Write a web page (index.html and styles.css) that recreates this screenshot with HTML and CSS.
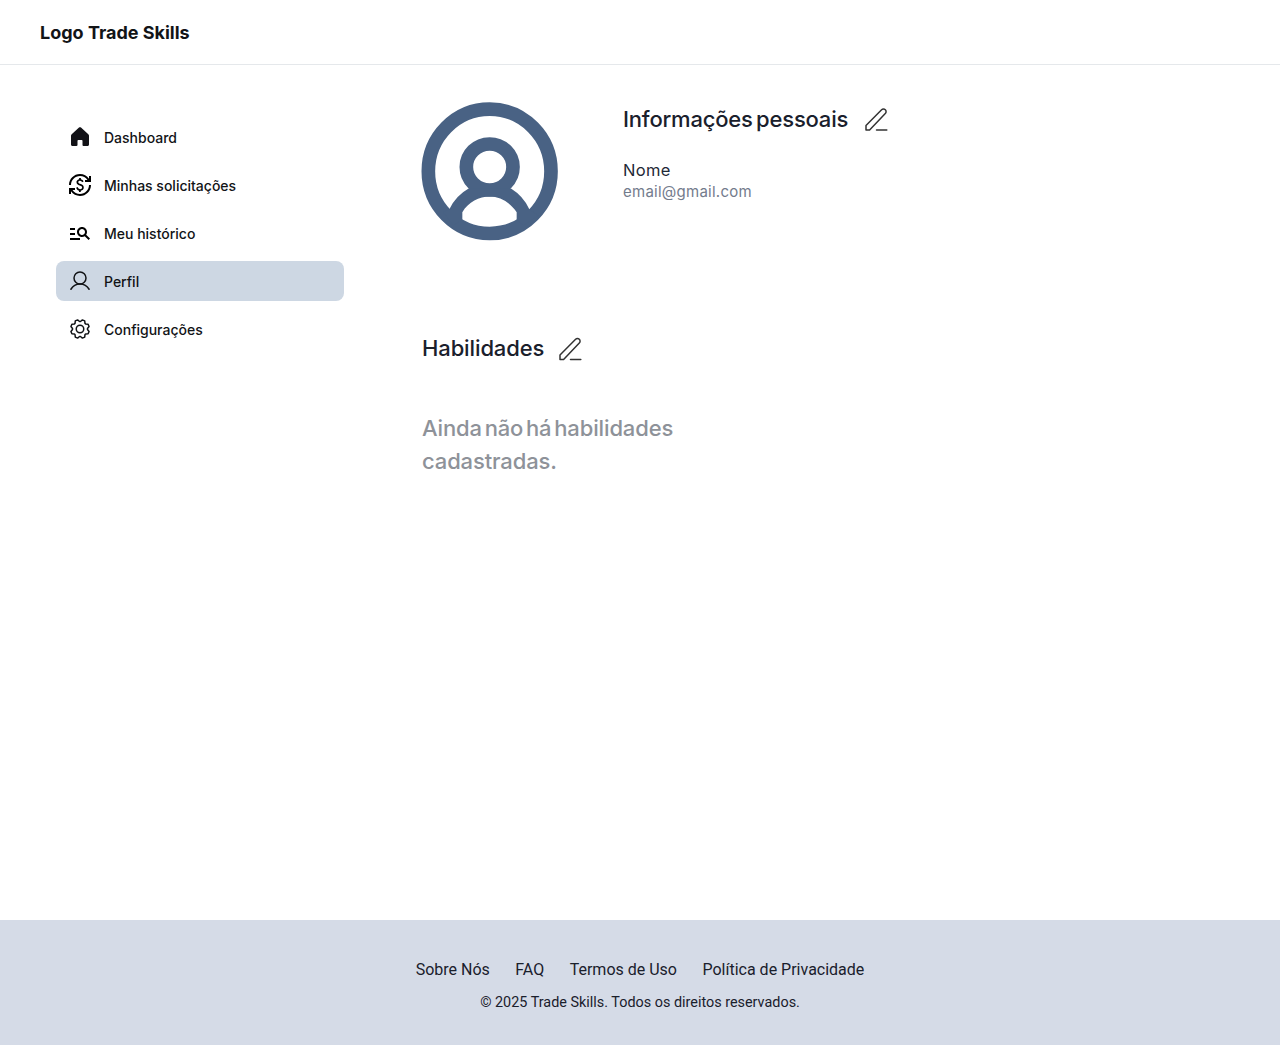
FILE: index.html
```html
<!DOCTYPE html>
<html lang="pt-BR">
<head>
<meta charset="utf-8">
<title>Perfil - Trade Skills</title>
<link rel="stylesheet" href="styles.css">
</head>
<body>
<header class="header"><div class="logo">Logo Trade Skills</div></header>
<div class="layout">
  <nav class="sidebar">
    <a class="item"><svg class="icon" viewBox="0 0 24 24"><path d="M12 2.2c.4 0 .7.1 1 .4l7.3 6.6c.5.4.7.9.7 1.5v8.800c0 .9-.6 1.500-1.500 1.500h-4.100c-.5 0-.9-.4-.9-.9v-4.300c0-.5-.3-.8-.8-.8h-3.400c-.5 0-.8.3-.8.8v4.300c0 .5-.4.9-.9.9H4.500C3.600 21 3 20.400 3 19.500v-8.800c0-.6.2-1.100.7-1.500L11 2.600c.3-.3.6-.4 1-.4z" fill="#121217"/></svg><span>Dashboard</span></a>
    <a class="item"><svg class="icon" viewBox="0 0 24 24"><path d="M12.890 11.100c-1.780-.59-2.640-.96-2.640-1.900 0-1.020 1.110-1.390 1.810-1.390 1.310 0 1.790.99 1.900 1.340l1.580-.67c-.15-.44-.82-1.910-2.660-2.230V5h-1.750v1.260c-2.600.56-2.620 2.850-2.620 2.960 0 2.270 2.250 2.910 3.350 3.310 1.580.56 2.280 1.070 2.280 2.030 0 1.130-1.050 1.610-1.980 1.610-1.820 0-2.340-1.870-2.400-2.090l-1.660.67c.63 2.190 2.280 2.780 2.900 2.960V19h1.750v-1.240c.52-.09 3.020-.59 3.020-3.220.01-1.390-.6-2.610-2.880-3.440zM3 21H1v-6h6v2H4.520A8.990 8.990 0 0 0 12 21c4.970 0 9-4.030 9-9h2c0 6.080-4.920 11-11 11-3.720 0-7.010-1.850-9-4.670V21zM1 12C1 5.920 5.920 1 12 1c3.720 0 7.010 1.850 9 4.670V3h2v6h-6V7h2.480C17.870 4.590 15.120 3 12 3c-4.970 0-9 4.030-9 9H1z"/></svg><span>Minhas solicitações</span></a>
    <a class="item"><svg class="icon" viewBox="0 0 24 24"><path d="M7 9H2V7h5v2zm0 3H2v2h5v-2zm13.590 7-3.830-3.830c-.8.52-1.740.83-2.760.83-2.760 0-5-2.240-5-5s2.240-5 5-5 5 2.240 5 5c0 1.020-.31 1.960-.83 2.750L22 17.590 20.590 19zM17 11c0-1.650-1.350-3-3-3s-3 1.350-3 3 1.350 3 3 3 3-1.350 3-3zM2 19h10v-2H2v2z"/></svg><span>Meu histórico</span></a>
    <a class="item active"><svg class="icon line" viewBox="0 0 256 256"><circle cx="128" cy="96" r="64"/><path d="M31 216c19.400-33.500 55.500-56 97-56s77.600 22.500 97 56"/></svg><span>Perfil</span></a>
    <a class="item"><svg class="icon line" viewBox="0 0 256 256"><circle cx="128" cy="128" r="40"/><path d="M41.430 178.090A99.140 99.140 0 0 1 31.360 153.800l16.780-21a81.590 81.590 0 0 1 0-9.640l-16.770-21a99.430 99.430 0 0 1 10.050-24.300l26.710-3a81 81 0 0 1 6.810-6.810l3-26.700A99.140 99.140 0 0 1 102.200 31.360l21 16.780a81.590 81.590 0 0 1 9.640 0l21-16.770a99.430 99.430 0 0 1 24.300 10.050l3 26.710a81 81 0 0 1 6.810 6.810l26.700 3a99.140 99.140 0 0 1 10.070 24.290l-16.780 21a81.590 81.590 0 0 1 0 9.640l16.770 21a99.430 99.430 0 0 1-10 24.300l-26.710 3a81 81 0 0 1-6.810 6.810l-3 26.700a99.140 99.140 0 0 1-24.290 10.070l-21-16.780a81.590 81.590 0 0 1-9.640 0l-21 16.770a99.430 99.430 0 0 1-24.300-10l-3-26.710a81 81 0 0 1-6.810-6.810Z"/></svg><span>Configurações</span></a>
  </nav>
  <main class="content">
    <section class="profile">
      <svg class="avatar" viewBox="33 29.5 411 417"><g fill="none" stroke="#496284" stroke-width="41"><ellipse cx="239" cy="237.500" rx="184" ry="186.500"/><ellipse cx="239" cy="224.500" rx="70" ry="69"/></g><path fill="#496284" d="M100 360 118 351Q138 310 176 289H303Q340 312 358 351L385 370 340 400 320 383V360C300 330 270 313 239 313S175 330 157 360V383L130 400Z"/></svg>
      <div class="details">
        <div class="heading"><h2 class="title wide">Informações pessoais</h2><svg class="pen" viewBox="0 0 24 24"><path d="M2 22V17.500L17.600 1.800a2.600 2.600 0 0 1 3.700 0 2.600 2.600 0 0 1 0 3.700L5.600 22zM12.500 22h10.300"/></svg></div>
        <p class="name">Nome</p>
        <p class="email">email@gmail.com</p>
      </div>
    </section>
    <section class="skills">
      <div class="heading compact"><h2 class="title">Habilidades</h2><svg class="pen" viewBox="0 0 24 24"><path d="M2 22.500V18L17.600 2.300a2.600 2.600 0 0 1 3.700 0 2.600 2.600 0 0 1 0 3.700L5.600 22.500zM12.500 22.500h10.300"/></svg></div>
      <p class="empty">Ainda não há habilidades<br>cadastradas.</p>
    </section>
  </main>
</div>
<footer class="footer">
  <div class="links"><a>Sobre Nós</a><a>FAQ</a><a>Termos de Uso</a><a>Política de Privacidade</a></div>
  <p class="copyright">© 2025 Trade Skills. Todos os direitos reservados.</p>
</footer>
</body>
</html>
```
FILE: styles.css
```css
* { box-sizing: border-box; margin: 0; padding: 0; }
body { background: #fff; font-family: Inter, sans-serif; color: #121417; }
.header { height: 65px; padding: 0 40px; border-bottom: 1px solid #e5e8eb; display: flex; align-items: center; }
.logo { font-size: 18px; font-weight: 700; line-height: 23px; }
.layout { display: flex; height: 855px; }
.sidebar { width: 421px; padding: 52px 77px 0 56px; display: flex; flex-direction: column; gap: 8px; }
.item { height: 40px; padding: 0 12px; display: flex; align-items: center; gap: 12px; border-radius: 8px; font-size: 14px; font-weight: 500; line-height: 21px; }
.active { background: #cdd7e3; }
.icon { width: 24px; height: 24px; flex: none; }
.line { fill: none; stroke: #121417; stroke-width: 16; stroke-linejoin: round; stroke-linecap: round; }
.profile { display: flex; padding-top: 37px; gap: 65px; height: 266px; }
.avatar { width: 137px; height: 139px; flex: none; }
.skills { padding-left: 1px; }
.heading { display: flex; align-items: center; gap: 16px; height: 34px; }
.compact { gap: 14px; }
.title { font-size: 22px; font-weight: 500; line-height: 33px; color: #1a202c; width: 122px; letter-spacing: -.12px; white-space: nowrap; }
.wide { width: 225px; letter-spacing: -.2px; word-spacing: -2.2px; }
.pen { width: 24px; height: 24px; fill: none; stroke: #333; stroke-width: 1.5; stroke-linejoin: round; stroke-linecap: round; margin-top: 2px; }
.name { margin-top: 22px; font-size: 16.5px; line-height: 24px; letter-spacing: .35px; color: #1f2937; }
.email { font-size: 15px; line-height: 20px; letter-spacing: .25px; color: #737b8c; }
.empty { margin-top: 47px; font-size: 22px; line-height: 33px; font-weight: 500; color: #8e9299; letter-spacing: -.13px; word-spacing: -3px; }
.footer { height: 125px; background: #d5dbe7; color: #1a202c; font-family: Roboto, sans-serif; text-align: center; padding-top: 38px; }
.links { display: flex; justify-content: center; gap: 25.5px; font-size: 16px; line-height: 24px; }
.copyright { font-size: 14.4px; line-height: 20px; margin-top: 11px; }
```
